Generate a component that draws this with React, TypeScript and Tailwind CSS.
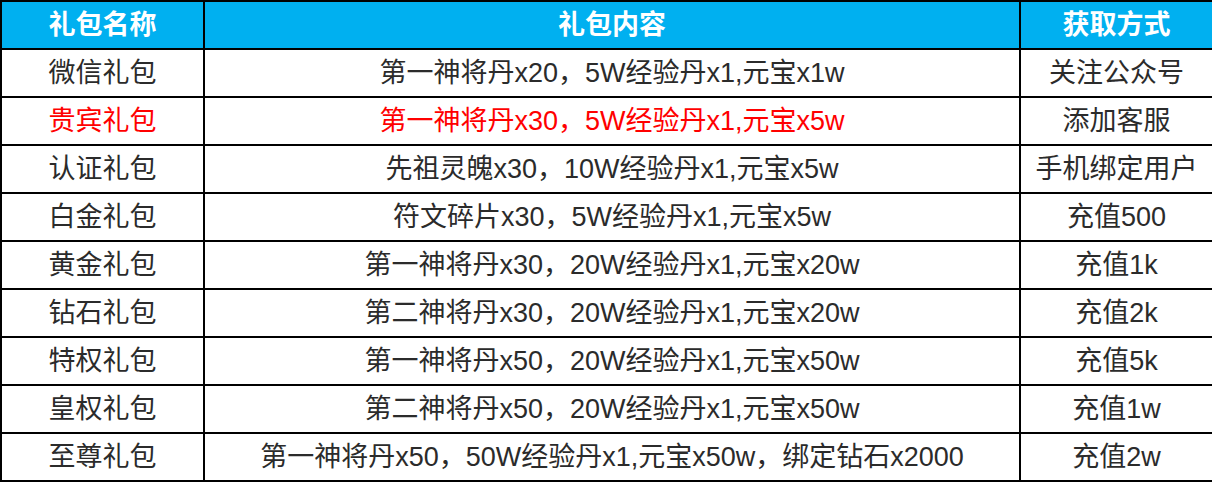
import React from "react";

const rows: { name: string; content: string; method: string; red?: boolean }[] = [
  { name: "微信礼包", content: "第一神将丹x20，5W经验丹x1,元宝x1w", method: "关注公众号" },
  { name: "贵宾礼包", content: "第一神将丹x30，5W经验丹x1,元宝x5w", method: "添加客服", red: true },
  { name: "认证礼包", content: "先祖灵魄x30，10W经验丹x1,元宝x5w", method: "手机绑定用户" },
  { name: "白金礼包", content: "符文碎片x30，5W经验丹x1,元宝x5w", method: "充值500" },
  { name: "黄金礼包", content: "第一神将丹x30，20W经验丹x1,元宝x20w", method: "充值1k" },
  { name: "钻石礼包", content: "第二神将丹x30，20W经验丹x1,元宝x20w", method: "充值2k" },
  { name: "特权礼包", content: "第一神将丹x50，20W经验丹x1,元宝x50w", method: "充值5k" },
  { name: "皇权礼包", content: "第二神将丹x50，20W经验丹x1,元宝x50w", method: "充值1w" },
  { name: "至尊礼包", content: "第一神将丹x50，50W经验丹x1,元宝x50w，绑定钻石x2000", method: "充值2w" },
];

export default function App() {
  return (
    <div
      className="w-[1212px] h-[482px] bg-white"
      style={{ fontFamily: '"Liberation Sans", "Noto Sans CJK SC", sans-serif' }}
    >
      <table className="w-[1212px] border-collapse table-fixed">
        <colgroup>
          <col className="w-[203px]" />
          <col className="w-[816px]" />
          <col className="w-[193px]" />
        </colgroup>
        <thead>
          <tr className="bg-[#00b0f0] text-white h-[48px]">
            <th className="border-2 border-black p-0 text-[27px] font-bold leading-none">礼包名称</th>
            <th className="border-2 border-black p-0 text-[27px] font-bold leading-none">礼包内容</th>
            <th className="border-2 border-black p-0 text-[27px] font-bold leading-none">获取方式</th>
          </tr>
        </thead>
        <tbody>
          {rows.map((r) => (
            <tr key={r.name} className="h-[48px] text-[#2b2b2b]">
              <td className={`border-2 border-black p-0 text-center text-[27px] leading-none whitespace-nowrap ${r.red ? "text-[#ff0000]" : ""}`}>{r.name}</td>
              <td className={`border-2 border-black p-0 text-center text-[27px] leading-none whitespace-nowrap ${r.red ? "text-[#ff0000]" : ""}`}>{r.content}</td>
              <td className="border-2 border-black p-0 text-center text-[27px] leading-none whitespace-nowrap">{r.method}</td>
            </tr>
          ))}
        </tbody>
      </table>
    </div>
  );
}
